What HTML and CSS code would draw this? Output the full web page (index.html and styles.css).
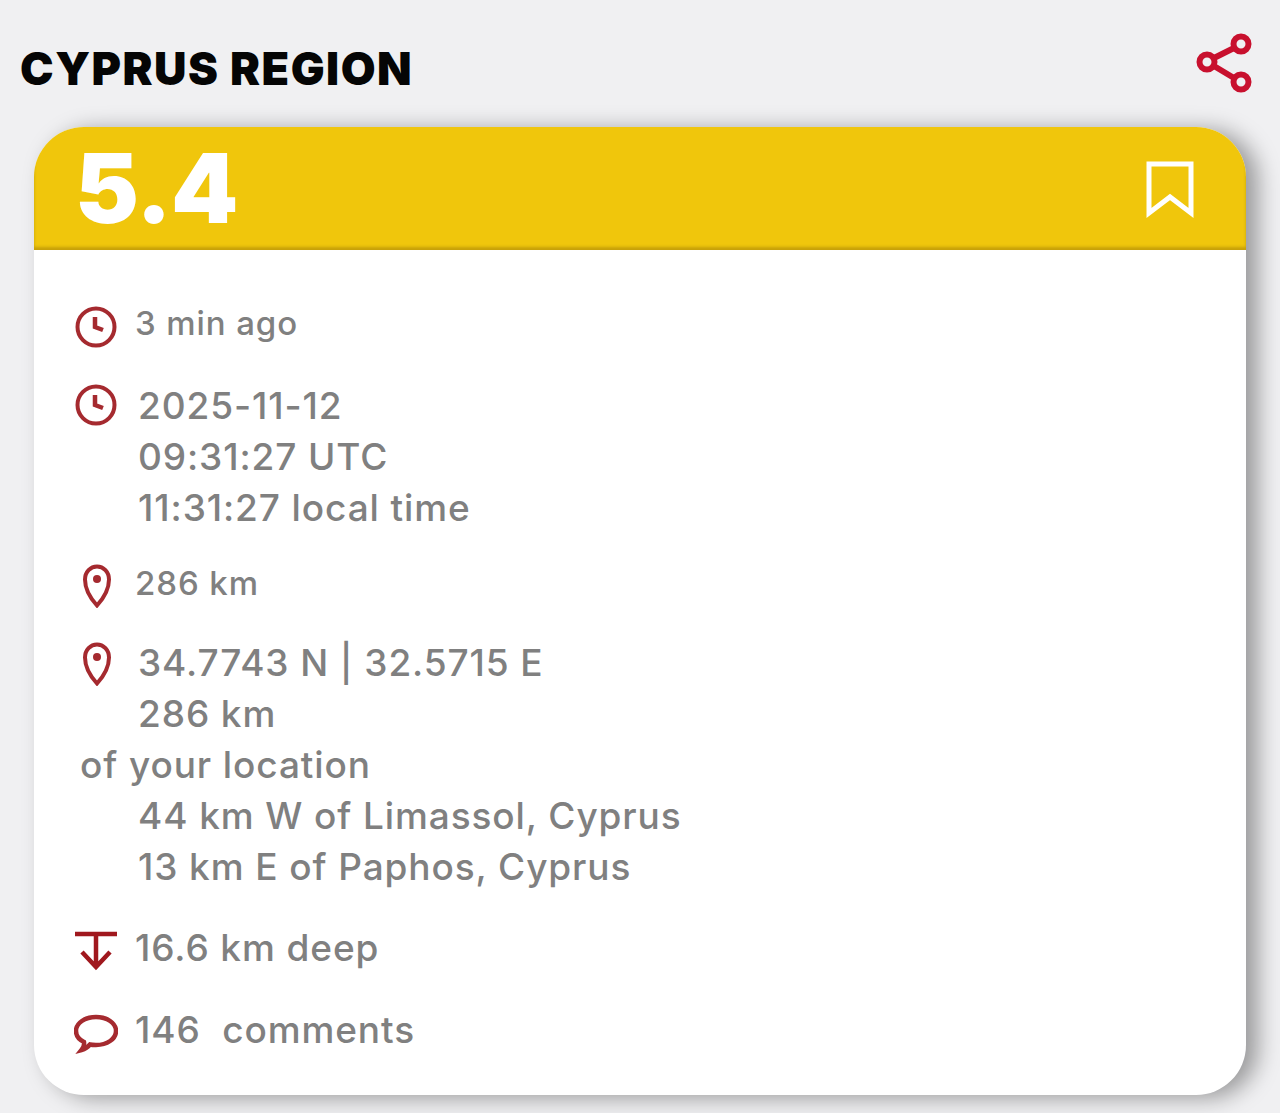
FILE: index.html
```html
<!DOCTYPE html>
<html lang="en">
<head>
    <meta charset="UTF-8">
    <title>Cyprus Region</title>
    <link rel="stylesheet" href="styles.css">
</head>
<body>
<div class="top">
    <h1 class="region">CYPRUS REGION</h1>
    <svg class="share" viewBox="0 0 60 62" width="60" height="62">
        <g fill="none" stroke="#c8102e" stroke-width="6">
            <path d="M20 26L40 16M20 34L40 46"/>
            <circle cx="13" cy="30" r="7.500"/>
            <circle cx="47" cy="12" r="7.500"/>
            <circle cx="47" cy="50" r="7.500"/>
        </g>
    </svg>
</div>
<div class="card">
    <div class="card-head">
        <span class="mag">5.4</span>
        <svg class="bookmark" viewBox="0 0 48 58" width="48" height="58">
            <path d="M3 3H45V52L24 36L3 52Z" fill="none" stroke="#fff" stroke-width="5"/>
        </svg>
    </div>
    <div class="card-body">
        <div class="row small">
            <svg class="icon" viewBox="0 0 44 44" width="44" height="44">
                <circle cx="22" cy="22" r="18.500" fill="none" stroke="#a52a2f" stroke-width="4"/>
                <path d="M21 12V22L29 25" fill="none" stroke="#a52a2f" stroke-width="4.500"/>
            </svg>
            <span>3 min ago</span>
        </div>
        <div class="row">
            <svg class="icon date-icon" viewBox="0 0 44 44" width="44" height="44">
                <circle cx="22" cy="22" r="18.500" fill="none" stroke="#a52a2f" stroke-width="4"/>
                <path d="M21 12V22L29 25" fill="none" stroke="#a52a2f" stroke-width="4.500"/>
            </svg>
            <div class="lines">
                <p>2025-11-12</p>
                <p>09:31:27 UTC</p>
                <p>11:31:27 local time</p>
            </div>
        </div>
        <div class="row small tight">
            <svg class="icon pin" viewBox="0 0 44 44" width="44" height="44">
                <path d="M23 41.500C18 36 11 26 11 15.500C11 8 16.500 2.500 23 2.500C29.500 2.500 35 8 35 15.500C35 26 28 36 23 41.500Z" fill="none" stroke="#a52a2f" stroke-width="4"/>
                <circle cx="23" cy="15" r="4" fill="#a52a2f"/>
            </svg>
            <span>286 km</span>
        </div>
        <div class="row mid">
            <svg class="icon pin" viewBox="0 0 44 44" width="44" height="44">
                <path d="M23 41.500C18 36 11 26 11 15.500C11 8 16.500 2.500 23 2.500C29.500 2.500 35 8 35 15.500C35 26 28 36 23 41.500Z" fill="none" stroke="#a52a2f" stroke-width="4"/>
                <circle cx="23" cy="15" r="4" fill="#a52a2f"/>
            </svg>
            <div class="lines">
                <p>34.7743 N | 32.5715 E</p>
                <p>286 km</p>
                <p class="outdent">of your location</p>
                <p>44 km W of Limassol, Cyprus</p>
                <p>13 km E of Paphos, Cyprus</p>
            </div>
        </div>
        <div class="row deep">
            <svg class="icon" viewBox="0 0 44 44" width="44" height="44">
                <path d="M1 4H43M22 4V36M8 22L22 37L36 22" fill="none" stroke="#a0181e" stroke-width="4.500"/>
            </svg>
            <span class="value">16.6 km deep</span>
        </div>
        <div class="row deep">
            <svg class="icon" viewBox="0 0 44 44" width="44" height="44">
                <path d="M10 30C4 27 2 23 2 19C2 11 11 5 22 5C33 5 42 11 42 19C42 27 33 33 22 33C20 33 18 33 16 32.500C14 35 11 37 7.500 38C9.500 35.500 10.500 33 10 30Z" fill="none" stroke="#a52a2f" stroke-width="4.500"/>
            </svg>
            <span class="value">146&nbsp; comments</span>
        </div>
    </div>
</div>
</body>
</html>
```

FILE: styles.css
```css
*{
    margin: 0;
    padding: 0;
    box-sizing: border-box;
}
body{
    height: 1113px;
    overflow: hidden;
    background: #f0f0f2;
    font-family: Inter, "Liberation Sans", sans-serif;
}
.top{
    display: flex;
    justify-content: space-between;
    align-items: center;
    height: 127px;
    padding: 0 26px 0 20px;
}
.region{
    font-size: 45px;
    font-weight: 900;
    line-height: 1;
    letter-spacing: 1.5px;
    color: #050505;
    margin-top: 9px;
}
.share{
    margin-bottom: 1px;
}
.card{
    margin: 0 34px;
    height: 968px;
    background: #fff;
    border-radius: 50px;
    box-shadow: 12px 3px 22px rgba(0,0,0,.36);
    overflow: hidden;
}
.card-head{
    display: flex;
    justify-content: space-between;
    align-items: center;
    height: 123px;
    padding: 0 52px 0 41px;
    background: #f0c60c;
    box-shadow: inset 0 -3px 3px rgba(120,90,0,.35);
}
.mag{
    font-size: 96px;
    font-weight: 900;
    line-height: 1;
    letter-spacing: -1px;
    color: #fff;
    margin-bottom: 2px;
}
.bookmark{
    margin-top: 2px;
}
.card-body{
    padding: 48px 0 0 40px;
    font-size: 37px;
    font-weight: 550;
    letter-spacing: .9px;
    line-height: 51px;
    color: #808080;
}
.row{
    display: flex;
    margin-top: 31px;
}
.row:first-child{
    margin-top: 0;
}
.row .icon{
    flex: none;
    margin-top: 8px;
}
.small{
    font-size: 33px;
}
.small span{
    margin-left: 17px;
}
.row.small .icon{
    margin-top: 7px;
}
.tight{
    margin-top: 25px;
}
.mid{
    margin-top: 28px;
}
.deep{
    margin-top: 30px;
}
.row .date-icon{
    margin-top: 3px;
}
.row .pin{
    margin-top: 5px;
}
.row.small .pin{
    margin-top: 6px;
}
.lines{
    margin-left: 20px;
}
.lines p.outdent{
    margin-left: -58px;
}
.value{
    margin-left: 17px;
}
```
